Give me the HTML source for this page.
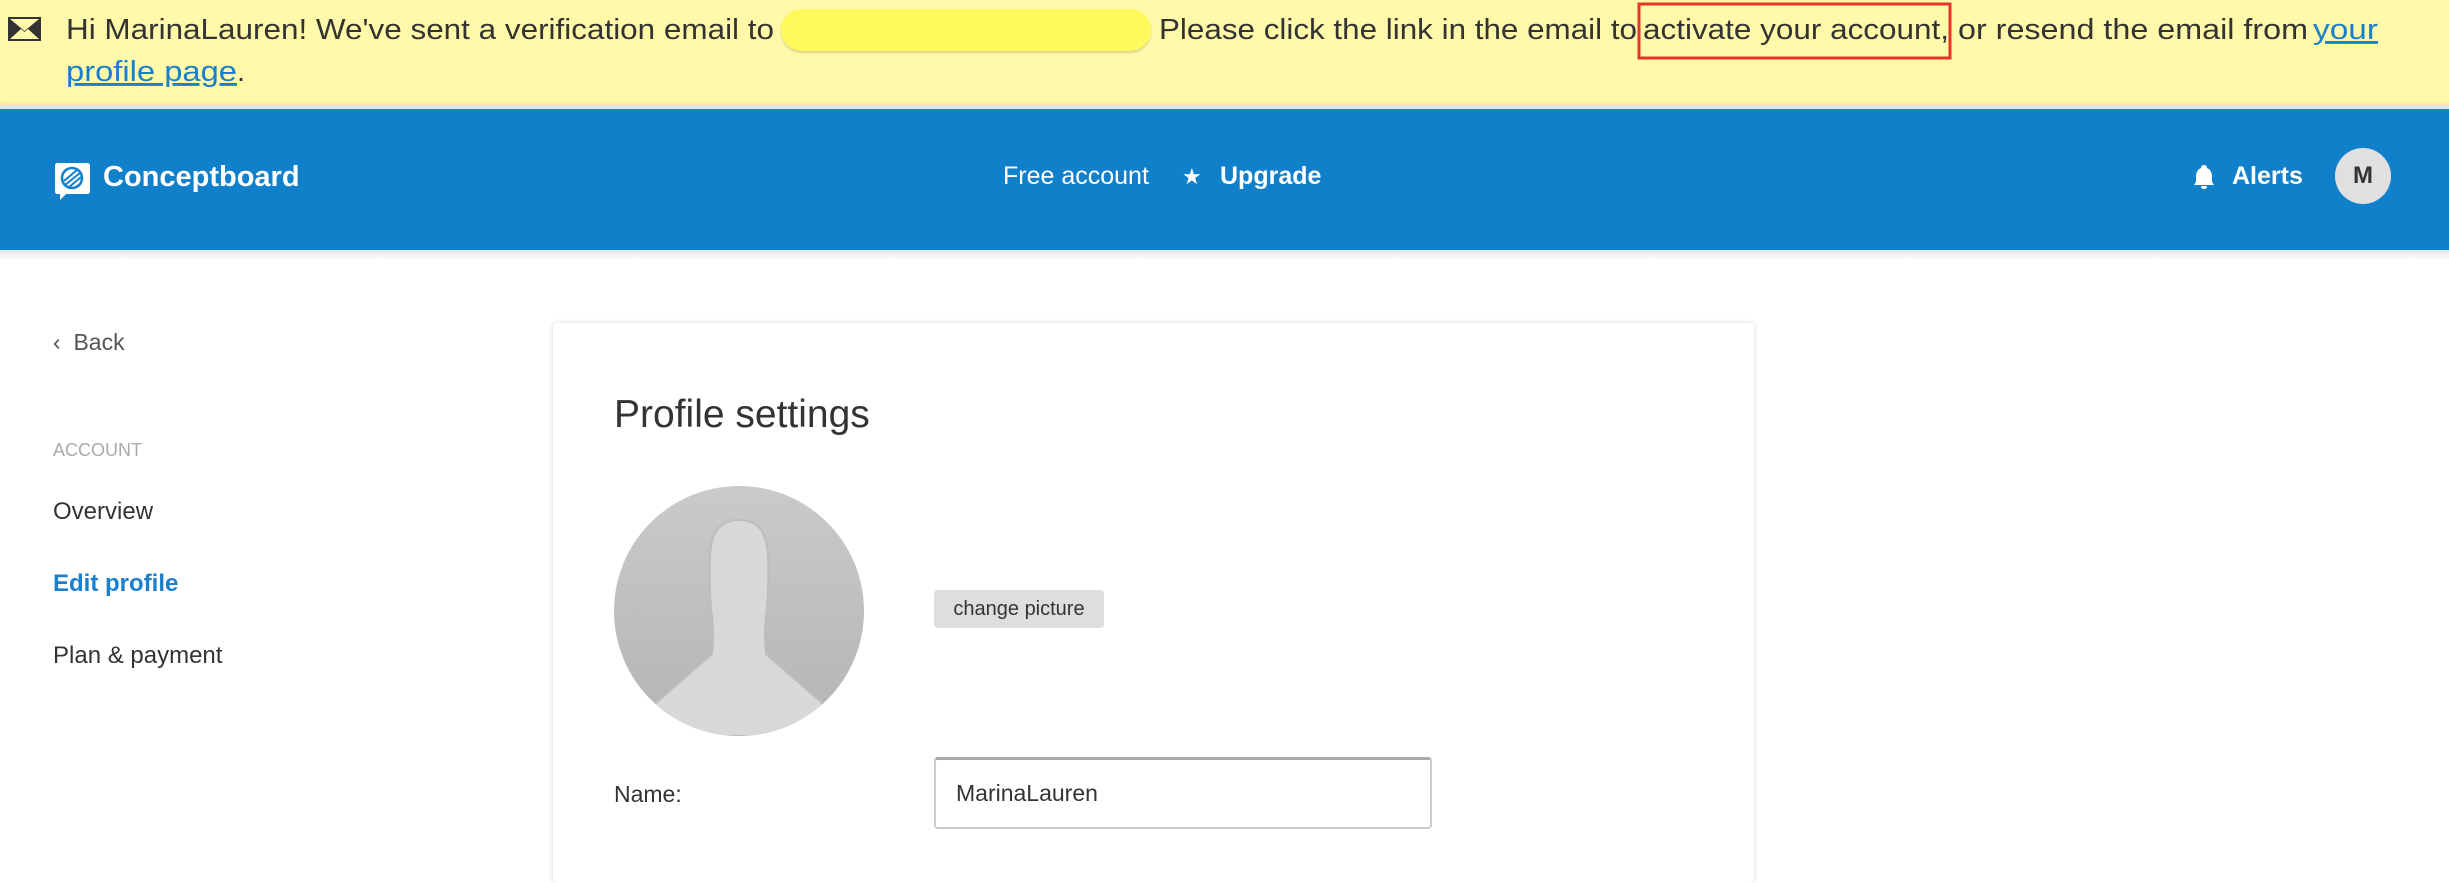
<!DOCTYPE html>
<html><head><meta charset="utf-8"><style>
*{margin:0;padding:0;box-sizing:border-box}
body{width:2449px;height:840px;overflow:hidden;background:#fff;font-family:"Liberation Sans",sans-serif;color:#333;position:relative}
.abs{position:absolute;white-space:nowrap}
#banner{position:absolute;left:0;top:0;width:2449px;height:106px;background:#fff9a9;box-shadow:inset 0 -6px 6px -4px rgba(0,0,0,0.08)}
#hdr{position:absolute;left:0;top:109px;width:2449px;height:141px;background:#1180cb;border-top:0}
#sep{position:absolute;left:0;top:106px;width:2449px;height:3px;background:#e4e4e4}
#shadow{position:absolute;left:0;top:250px;width:2449px;height:10px;background:linear-gradient(#e6e6e6,#fff)}
.nav{color:#fff;font-size:25px;top:162px}
.side{font-size:24px;color:#333;left:53px}
#card{position:absolute;left:553px;top:323px;width:1201px;height:560px;background:#fff;border-radius:4px;box-shadow:0 0 6px rgba(0,0,0,0.15)}
</style></head><body>
<div id="banner"></div>
<svg class="abs" style="left:0;top:0" width="2449" height="106">
 <g fill="#333">
  <rect x="8" y="17" width="33" height="24" fill="#333"/>
  <path d="M10 19 L24.5 31 L39 19 Z M10 39 L21 29 L24.5 32 L28 29 L39 39 Z" fill="#fff9a9"/>
 </g>
 <rect x="781" y="9" width="370" height="42" rx="21" fill="#fff95c" style="filter:drop-shadow(0 2px 1px rgba(0,0,0,.15))"/>
 <g font-family="Liberation Sans, sans-serif" font-size="29" fill="#333">
  <text x="66" y="39" textLength="708" lengthAdjust="spacingAndGlyphs">Hi MarinaLauren! We've sent a verification email to</text>
  <text x="1159" y="39" textLength="478" lengthAdjust="spacingAndGlyphs">Please click the link in the email to</text>
  <text x="1643" y="39" textLength="306" lengthAdjust="spacingAndGlyphs">activate your account,</text>
  <text x="1958" y="39" textLength="350" lengthAdjust="spacingAndGlyphs">or resend the email from</text>
  <text x="2313" y="39" textLength="65" lengthAdjust="spacingAndGlyphs" fill="#1a7fcc" text-decoration="underline">your</text>
  <text x="66" y="81" textLength="171" lengthAdjust="spacingAndGlyphs" fill="#1a7fcc" text-decoration="underline">profile page</text>
  <text x="237" y="81">.</text>
 </g>
 <rect x="1639" y="4" width="311" height="54" fill="none" stroke="#e8352a" stroke-width="3"/>
</svg>
<div id="sep"></div>
<div id="hdr"></div>
<div id="shadow"></div>
<svg class="abs" style="left:52px;top:161px" width="40" height="40" viewBox="0 0 40 40">
 <path d="M3 2 H35 Q38 2 38 5 V30 Q38 33 35 33 H14 L8 39 V33 H5 Q3 33 3 30 V5 Q3 2 5 2Z" fill="#fff"/>
 <circle cx="20" cy="17" r="10" fill="none" stroke="#1180cb" stroke-width="2.5"/>
 <path d="M12 20 L25 9 M13 24 L28 12 M16 27 L29 16" stroke="#1180cb" stroke-width="2"/>
</svg>
<div class="abs nav" style="left:103px;top:161px;font-size:29px;font-weight:bold">Conceptboard</div>
<div class="abs nav" style="left:1003px">Free account</div>
<div class="abs nav" style="left:1182px;font-size:22px;top:164px">★</div>
<div class="abs nav" style="left:1220px;font-weight:bold">Upgrade</div>
<svg class="abs" style="left:2193px;top:164px" width="22" height="26" viewBox="0 0 22 26"><path d="M11 1 Q14 1 14 4 Q19 6 19 13 V18 L21 21 H1 L3 18 V13 Q3 6 8 4 Q8 1 11 1Z M8 22 H14 Q14 25 11 25 Q8 25 8 22Z" fill="#fff"/></svg>
<div class="abs nav" style="left:2232px;font-weight:bold">Alerts</div>
<div class="abs" style="left:2335px;top:148px;width:56px;height:56px;border-radius:50%;background:#e0e0e0;color:#333;font-weight:bold;font-size:24px;text-align:center;line-height:56px">M</div>

<div class="abs" style="left:53px;top:329px;font-size:23px;color:#555">‹&nbsp; Back</div>
<div class="abs" style="left:53px;top:440px;font-size:18px;color:#aaa">ACCOUNT</div>
<div class="abs side" style="top:498px">Overview</div>
<div class="abs side" style="top:570px;color:#1a7fcc;font-weight:bold">Edit profile</div>
<div class="abs side" style="top:642px">Plan &amp; payment</div>

<div id="card"></div>
<div class="abs" style="left:614px;top:393px;font-size:39px;color:#333">Profile settings</div>
<svg class="abs" style="left:614px;top:486px" width="250" height="250" viewBox="0 0 250 250">
 <defs><clipPath id="c"><circle cx="125" cy="125" r="125"/></clipPath>
 <linearGradient id="g" x1="0" y1="0" x2="0" y2="1"><stop offset="0" stop-color="#cacaca"/><stop offset="1" stop-color="#b4b4b4"/></linearGradient></defs>
 <g clip-path="url(#c)">
  <rect width="250" height="250" fill="url(#g)"/>
  <path d="M125 34 Q97 34 96 70 Q95 110 98 130 Q100 150 98 168 L20 236 V250 H230 V236 L152 168 Q150 150 152 130 Q155 110 154 70 Q153 34 125 34Z" fill="#d8d8d8" stroke="#bdbdbd" stroke-width="2"/>
 </g>
</svg>
<div class="abs" style="left:934px;top:590px;width:170px;height:38px;background:#dedede;border-radius:4px;font-size:20px;text-align:center;line-height:38px;color:#333">change picture</div>
<div class="abs" style="left:614px;top:781px;font-size:23px">Name:</div>
<div class="abs" style="left:934px;top:757px;width:498px;height:72px;border:2px solid #ccc;border-top:3px solid #aaa;border-radius:4px;font-size:23px;padding-left:20px;line-height:66px">MarinaLauren</div>
</body></html>
